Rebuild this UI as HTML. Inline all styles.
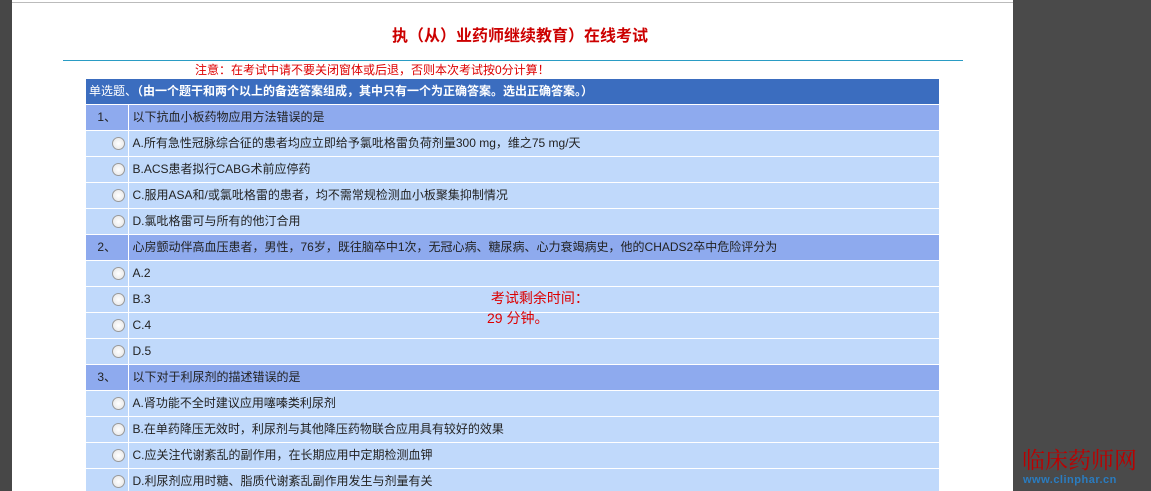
<!DOCTYPE html>
<html><head><meta charset="utf-8"><style>
*{margin:0;padding:0;box-sizing:border-box}
html,body{width:1151px;height:491px;overflow:hidden}
body{background:#fff;font-family:"Liberation Sans","Noto Sans CJK SC",sans-serif;position:relative}
.ls{position:absolute;left:0;top:0;width:12px;height:491px;background:#474747}
.rs{position:absolute;left:1013px;top:0;width:138px;height:491px;background:#4a4a4a}
.top{position:absolute;left:12px;top:2px;width:1001px;height:1px;background:#bbb}
.title{position:absolute;left:0;width:1040px;top:22px;text-align:center;color:#c00;font-size:16px;font-weight:bold}
.line{position:absolute;left:63px;top:60px;width:900px;height:1px;background:#2a9cc4}
.note{position:absolute;left:195px;top:61px;color:#d00;font-size:12px}
table{position:absolute;left:86px;top:79px;width:853px;border-collapse:collapse;font-size:12px;color:#222}
td{height:26px;border-bottom:1px solid #fff;padding:0 0 0 4px;white-space:nowrap;line-height:14px}
td.n{width:42px;border-right:1px solid #fff;text-align:center;padding:0}
tr.h td{background:#3b6dbf;color:#fff;height:25px;padding-left:3px}
tr.q td{background:#8eaaee}
tr.o td{background:#c0d9fb}
.r{display:inline-block;width:13px;height:13px;border-radius:50%;border:1px solid #999;background:radial-gradient(#fff,#e4e4e4);vertical-align:middle;margin-left:24px}
.timer{position:absolute;left:487px;top:288px;color:#d00;font-size:14px;line-height:20px}
.logo{position:absolute;left:1022px;top:446px;color:#b00;font-size:23px;line-height:26px;font-family:"Noto Serif CJK SC",serif}
.url{position:absolute;left:1023px;top:474px;color:#2a7cc0;font-size:11px;line-height:13px;font-weight:bold;letter-spacing:0.5px}
</style></head><body>
<div class="ls"></div><div class="rs"></div><div class="top"></div>
<div class="title">执（从）业药师继续教育）在线考试</div>
<div class="line"></div>
<div class="note">注意：在考试中请不要关闭窗体或后退，否则本次考试按0分计算！</div>
<table>
<tr class="h"><td colspan="2">单选题、<b>（由一个题干和两个以上的备选答案组成，其中只有一个为正确答案。选出正确答案。）</b></td></tr>
<tr class="q"><td class="n">1、</td><td>以下抗血小板药物应用方法错误的是</td></tr>
<tr class="o"><td class="n"><span class="r"></span></td><td>A.所有急性冠脉综合征的患者均应立即给予氯吡格雷负荷剂量300 mg，维之75 mg/天</td></tr>
<tr class="o"><td class="n"><span class="r"></span></td><td>B.ACS患者拟行CABG术前应停药</td></tr>
<tr class="o"><td class="n"><span class="r"></span></td><td>C.服用ASA和/或氯吡格雷的患者，均不需常规检测血小板聚集抑制情况</td></tr>
<tr class="o"><td class="n"><span class="r"></span></td><td>D.氯吡格雷可与所有的他汀合用</td></tr>
<tr class="q"><td class="n">2、</td><td>心房颤动伴高血压患者，男性，76岁，既往脑卒中1次，无冠心病、糖尿病、心力衰竭病史，他的CHADS2卒中危险评分为</td></tr>
<tr class="o"><td class="n"><span class="r"></span></td><td>A.2</td></tr>
<tr class="o"><td class="n"><span class="r"></span></td><td>B.3</td></tr>
<tr class="o"><td class="n"><span class="r"></span></td><td>C.4</td></tr>
<tr class="o"><td class="n"><span class="r"></span></td><td>D.5</td></tr>
<tr class="q"><td class="n">3、</td><td>以下对于利尿剂的描述错误的是</td></tr>
<tr class="o"><td class="n"><span class="r"></span></td><td>A.肾功能不全时建议应用噻嗪类利尿剂</td></tr>
<tr class="o"><td class="n"><span class="r"></span></td><td>B.在单药降压无效时，利尿剂与其他降压药物联合应用具有较好的效果</td></tr>
<tr class="o"><td class="n"><span class="r"></span></td><td>C.应关注代谢紊乱的副作用，在长期应用中定期检测血钾</td></tr>
<tr class="o"><td class="n"><span class="r"></span></td><td>D.利尿剂应用时糖、脂质代谢紊乱副作用发生与剂量有关</td></tr>
</table>
<div class="timer">&nbsp;考试剩余时间：<br>29 分钟。</div>
<div class="logo">临床药师网</div>
<div class="url">www.clinphar.cn</div>
</body></html>
